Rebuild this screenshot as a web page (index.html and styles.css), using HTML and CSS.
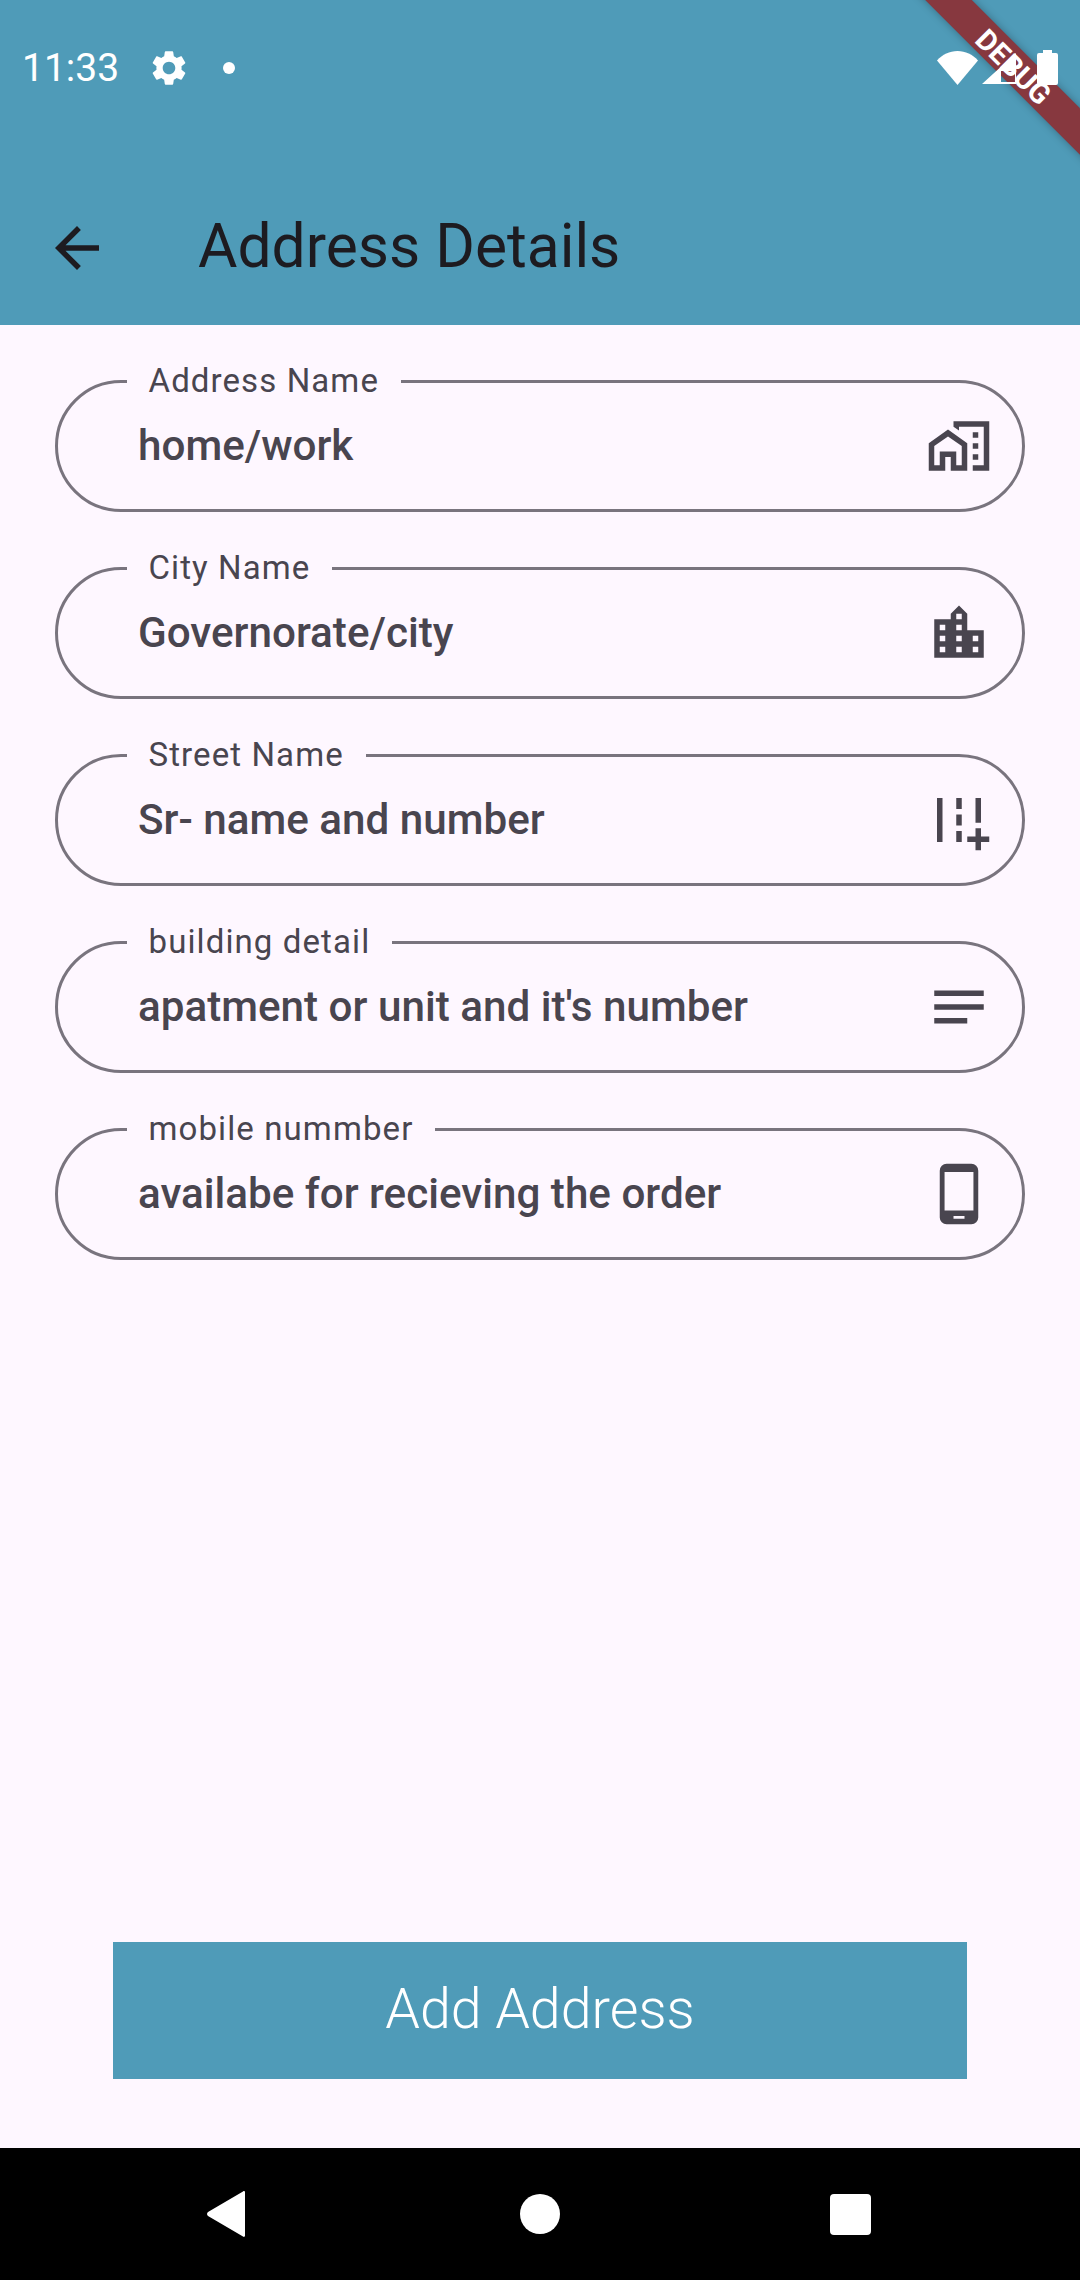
FILE: index.html

```html
<!DOCTYPE html>
<html lang="en">
<head>
  <meta charset="UTF-8" />
  <meta name="viewport" content="width=device-width, initial-scale=1.0"/>
  <title>Address Details</title>
  <link rel="stylesheet" href="styles.css">
</head>
<body>
  <div class="screen">
    <header class="top">
      <div class="status-bar">
        <span class="time">11:33</span>
        <svg class="gear" viewBox="0 0 24 24"><path d="M19.14 12.94c.04-.3.06-.61.06-.94 0-.32-.02-.64-.07-.94l2.03-1.58c.18-.14.23-.41.12-.61l-1.92-3.32c-.12-.22-.37-.29-.59-.22l-2.39.96c-.5-.38-1.03-.7-1.62-.94l-.36-2.54c-.04-.24-.24-.41-.48-.41h-3.84c-.24 0-.43.17-.47.41l-.36 2.54c-.59.24-1.13.57-1.62.94l-2.39-.96c-.22-.08-.47 0-.59.22L2.74 8.87c-.12.21-.08.47.12.61l2.03 1.58c-.05.3-.09.63-.09.94s.02.64.07.94l-2.03 1.58c-.18.14-.23.41-.12.61l1.92 3.32c.12.22.37.29.59.22l2.39-.96c.5.38 1.03.7 1.62.94l.36 2.54c.05.24.24.41.48.41h3.84c.24 0 .44-.17.47-.41l.36-2.54c.59-.24 1.13-.56 1.62-.94l2.39.96c.22.08.47 0 .59-.22l1.92-3.32c.12-.22.07-.47-.12-.61l-2.01-1.58zM12 15.6c-1.98 0-3.6-1.62-3.6-3.6s1.62-3.6 3.6-3.6 3.6 1.62 3.6 3.6-1.62 3.6-3.6 3.6z"/></svg>
        <span class="dot"></span>
        <span class="spacer"></span>
        <svg class="wifi" viewBox="0 0 41 34"><path d="M0 9.5C5.5 3.5 12.5 0 20.5 0S35.500 3.500 41 9.500L20.500 34z"/></svg>
        <svg class="signal" viewBox="0 0 34 31"><path fill-rule="evenodd" d="M34 0v31H0zM19 18v11h14V18z"/></svg>
        <svg class="battery" viewBox="0 0 21 35"><path d="M6 0h9v3h4a2 2 0 0 1 2 2v28a2 2 0 0 1-2 2H2a2 2 0 0 1-2-2V5a2 2 0 0 1 2-2h4z"/></svg>
      </div>
      <div class="app-bar">
        <svg class="back" viewBox="0 0 24 24"><path d="M20 11H7.830l5.590-5.590L12 4l-8 8 8 8 1.410-1.410L7.830 13H20v-2z"/></svg>
        <h1>Address Details</h1>
      </div>
    </header>

    <main class="content">
      <form class="fields">
        <fieldset class="field">
          <legend>Address Name</legend>
          <span class="hint">home/work</span>
          <svg class="icon" viewBox="0 0 24 24"><path d="M1 11v10h6v-5h2v5h6V11L8 6 1 11zM13 19h-2v-5H5v5H3v-7l5-3.500 5 3.500v7z"/><path d="M10 3v1.970l2 1.430V5h9v14h-4v2h6V3z"/><path d="M17 7h2v2h-2zM17 11h2v2h-2zM17 15h2v2h-2z"/></svg>
        </fieldset>
        <fieldset class="field">
          <legend>City Name</legend>
          <span class="hint">Governorate/city</span>
          <svg class="icon" viewBox="0 0 24 24"><path d="M15 11V5l-3-3-3 3v2H3v14h18V11h-6zm-8 8H5v-2h2v2zm0-4H5v-2h2v2zm0-4H5V9h2v2zm6 8h-2v-2h2v2zm0-4h-2v-2h2v2zm0-4h-2V9h2v2zm0-4h-2V5h2v2zm6 12h-2v-2h2v2zm0-4h-2v-2h2v2z"/></svg>
        </fieldset>
        <fieldset class="field">
          <legend>Street Name</legend>
          <span class="hint">Sr- name and number</span>
          <svg class="icon" viewBox="0 0 24 24"><path d="M20 18v-3h-2v3h-3v2h3v3h2v-3h3v-2zM18 4h2v9h-2zM4 4h2v16H4zM11 4h2v4h-2zM11 10h2v4h-2zM11 16h2v4h-2z"/></svg>
        </fieldset>
        <fieldset class="field">
          <legend>building detail</legend>
          <span class="hint">apatment or unit and it's number</span>
          <svg class="icon" viewBox="0 0 24 24"><path d="M3 18h12v-2H3v2zM3 6v2h18V6H3zm0 7h18v-2H3v2z"/></svg>
        </fieldset>
        <fieldset class="field">
          <legend>mobile nummber</legend>
          <span class="hint">availabe for recieving the order</span>
          <svg class="icon" viewBox="0 0 24 24"><path d="M16.500 1h-9A2.500 2.500 0 0 0 5 3.500v17A2.500 2.500 0 0 0 7.500 23h9a2.500 2.500 0 0 0 2.500-2.500v-17A2.500 2.500 0 0 0 16.500 1zM14 21h-4v-1h4v1zm3.250-3H6.750V4h10.500v14z"/></svg>
        </fieldset>
      </form>
      <button class="add-btn" type="button">Add Address</button>
    </main>

    <nav class="nav-bar">
      <svg class="nav-back" viewBox="0 0 38 46"><path d="M36 .5c1-.8 2-.3 2 1v43c0 1.300-1 1.800-2 1L1 25c-1.300-1-1.300-3 0-4z"/></svg>
      <span class="nav-home"></span>
      <span class="nav-recent"></span>
    </nav>

    <div class="debug-banner">DEBUG</div>
  </div>
</body>
</html>
```

FILE: styles.css

```css
* { box-sizing: border-box; }
html, body { margin: 0; padding: 0; }
body { font-family: Roboto, "Liberation Sans", sans-serif; background: #fef7ff; }

.screen { position: relative; width: 1080px; height: 2280px; overflow: hidden; display: flex; flex-direction: column; }

/* header */
.top { height: 325px; background: #4f9bb8; flex: none; }
.status-bar { position: relative; z-index: 2; height: 135px; display: flex; align-items: center; padding: 0 22px 0 22px; fill: #fff; color: #fff; }
.time { font-size: 39px; margin-right: 29px; }
.gear { width: 42px; height: 42px; margin-right: 33px; }
.dot { width: 12px; height: 12px; border-radius: 50%; background: #fff; }
.spacer { flex: 1; }
.wifi { width: 41px; height: 34px; margin-right: 4px; }
.signal { width: 34px; height: 31px; margin-top: 2px; margin-right: 21px; }
.battery { width: 21px; height: 35px; }

.app-bar { height: 190px; display: flex; align-items: center; padding: 33px 0 0 44px; }
.back { width: 66px; height: 66px; margin-top: 3px; margin-right: 88px; fill: #1d1b20; }
.app-bar h1 { margin: 0; font-size: 60.5px; font-weight: 400; color: #1d1b20; }

/* form */
.content { flex: 1; display: flex; flex-direction: column; padding: 37.5px 55px 69px; }
.fields { display: flex; flex-direction: column; gap: 37.5px; }

.field { height: 149.5px; margin: 0; border: 3px solid #79747e; border-radius: 66px; padding: 12px 30px 0 0; display: flex; align-items: center; justify-content: space-between; min-width: 0; }
.field legend { margin-left: 68.5px; padding: 0 22px 2px; font-size: 33px; line-height: 36px; letter-spacing: 1.1px; color: #49454f; }
.hint { margin-left: 80px; font-size: 42.2px; font-weight: 500; color: #49454f; }
.icon { width: 66px; height: 66px; fill: #49454f; flex: none; }

.add-btn { margin: auto 58px 0; height: 137px; padding: 0 0 2px; border: 0; background: #4f9bb8; color: #fff; font-family: inherit; font-size: 55.5px; font-weight: 300; }

/* android nav */
.nav-bar { height: 132px; flex: none; background: #000; display: flex; align-items: center; padding-left: 207px; }
.nav-back { width: 38px; height: 46px; fill: #fff; }
.nav-home { width: 40px; height: 40px; border-radius: 50%; background: #fff; margin-left: 275px; }
.nav-recent { width: 41px; height: 41px; border-radius: 4px; background: #fff; margin-left: 270px; }

/* flutter debug ribbon */
.debug-banner { position: absolute; top: 47px; left: 862px; width: 300px; height: 33px; padding-left: 7px; transform: rotate(45deg); background: #87383f; box-shadow: 0 0 8px rgba(0,0,0,.3); color: #fff; font-size: 29px; font-weight: 700; line-height: 36px; text-align: center; }
```
